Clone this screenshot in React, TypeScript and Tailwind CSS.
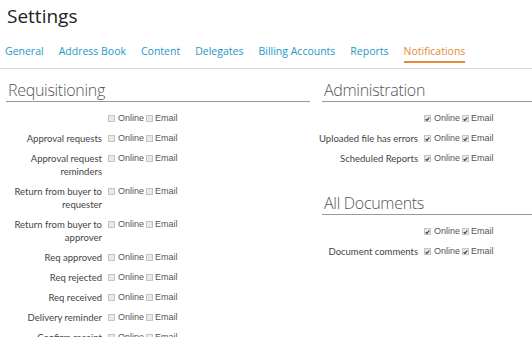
import React from "react";

const tabs = ["General", "Address Book", "Content", "Delegates", "Billing Accounts", "Reports", "Notifications"];

const reqRows = [
  "",
  "Approval requests",
  "Approval request reminders",
  "Return from buyer to requester",
  "Return from buyer to approver",
  "Req approved",
  "Req rejected",
  "Req received",
  "Delivery reminder",
  "Confirm receipt",
];

const adminRows = ["", "Uploaded file has errors", "Scheduled Reports"];
const docRows = ["", "Document comments"];

function Box({ checked }: { checked: boolean }) {
  return (
    <span className="inline-flex w-[7px] h-[7px] items-center justify-center border border-[#c4c4c4] bg-[#e9e9e9]">
      {checked && (
        <svg width="6" height="6" viewBox="0 0 6 6">
          <path d="M0.8 3.2 L2.3 4.7 L5.2 1.2" stroke="#333" strokeWidth="1.3" fill="none" />
        </svg>
      )}
    </span>
  );
}

function Row({ label, checked, wide }: { label: string; checked: boolean; wide?: boolean }) {
  return (
    <div className="flex items-start mb-[7px] leading-[13px]">
      <div
        className={
          wide
            ? "w-[104px] -ml-[8px] text-right text-[9.5px] text-[#444] font-['Lato',sans-serif]"
            : "w-[96px] text-right text-[9.5px] text-[#444] font-['Lato',sans-serif]"
        }
      >
        {label}
      </div>
      <div className="ml-[6px] h-[13px] flex items-center text-[9px] text-[#555] font-['Liberation_Sans',Arial,sans-serif]">
        <Box checked={checked} />
        <span className="ml-[3px]">Online</span>
        <span className="ml-[2px] flex"><Box checked={checked} /></span>
        <span className="ml-[2px]">Email</span>
      </div>
    </div>
  );
}

function Heading({ children }: { children: React.ReactNode }) {
  return (
    <h2 className="pl-[2px] text-[16px] tracking-[-0.3px] leading-[22px] font-light text-[#555] border-b border-[#9a9a9a] mb-[10px]">
      {children}
    </h2>
  );
}

export default function App() {
  return (
    <div className="w-[532px] h-[337px] overflow-hidden bg-white font-['Open_Sans',sans-serif]">
      <h1 className="pl-[7px] pt-[3px] text-[19px] leading-[26px] text-[#222]">Settings</h1>
      <nav className="mt-[15px] flex px-[5px] pb-[5px] border-b border-[#d6d6d6] text-[10.5px] leading-[15px]">
        {tabs.map((t) => (
          <span
            key={t}
            className={
              t === "Notifications"
                ? "mr-[15px] pb-[2px] border-b-2 border-[#e5893a] text-[#e5893a]"
                : "mr-[15px] pb-[2px] border-b-2 border-transparent text-[#2399c8]"
            }
          >
            {t}
          </span>
        ))}
      </nav>
      <div className="flex pl-[6px] mt-[10px]">
        <div className="w-[304px] shrink-0">
          <Heading>Requisitioning</Heading>
          {reqRows.map((r, i) => (
            <Row key={i} label={r} checked={false} />
          ))}
        </div>
        <div className="ml-[12px] flex-1">
          <Heading>Administration</Heading>
          {adminRows.map((r, i) => (
            <Row key={i} label={r} checked={true} wide />
          ))}
          <div className="mt-[27px]">
            <Heading>All Documents</Heading>
            {docRows.map((r, i) => (
              <Row key={i} label={r} checked={true} wide />
            ))}
          </div>
        </div>
      </div>
    </div>
  );
}
